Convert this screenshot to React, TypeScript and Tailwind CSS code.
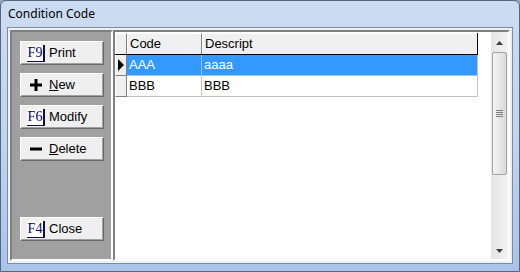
import React from 'react';

type Row = { code: string; desc: string; selected?: boolean };

const rows: Row[] = [
  { code: 'AAA', desc: 'aaaa', selected: true },
  { code: 'BBB', desc: 'BBB' },
];

function KeyIcon({ label }: { label: string }) {
  return (
    <span className="flex h-[17px] w-[18px] items-center justify-center border-b border-r-2 border-[#101048] bg-white font-['Liberation_Serif'] text-[14px] leading-none text-[#000080]">
      {label}
    </span>
  );
}

function PlusIcon() {
  return (
    <svg width="12" height="12" viewBox="0 0 12 12" className="mx-[3px]">
      <path d="M4.5 0h3v4.5H12v3H7.5V12h-3V7.5H0v-3h4.5z" fill="#000" />
    </svg>
  );
}

function MinusIcon() {
  return (
    <svg width="12" height="12" viewBox="0 0 12 12" className="mx-[3px]">
      <rect x="0" y="4.5" width="12" height="3" fill="#000" />
    </svg>
  );
}

function Button({ icon, children }: { icon: React.ReactNode; children: React.ReactNode }) {
  return (
    <div className="flex h-[24px] w-[84px] items-center gap-[4px] border border-b-[#696969] border-l-white border-r-[#696969] border-t-white bg-[#efefef] pl-[6px] text-[13px] text-black shadow-[inset_-1px_-1px_0_#a0a0a0]">
      {icon}
      <span>{children}</span>
    </div>
  );
}

export default function App() {
  return (
    <div className="h-[272px] w-[520px] overflow-hidden bg-[#9aa7b6] font-['Liberation_Sans',sans-serif]">
      <div className="flex h-full flex-col rounded-t-[6px] border border-[#56667d] bg-gradient-to-b from-[#cbdcf2] via-[#c2d5ef] to-[#a9c3ea]">
        <div className="flex h-[26px] items-center pl-[7px] font-['Noto_Sans',sans-serif] text-[12px] text-black">
          Condition Code
        </div>
        <div className="mx-[6px] mb-[7px] flex flex-1 border border-[#7d8ca3] bg-[#f0f0f0] p-[2px]">
          {/* left command panel */}
          <div className="flex w-[103px] flex-col gap-[8px] border-2 border-b-white border-l-[#808080] border-r-white border-t-[#808080] bg-[#a0a0a0] pb-[18px] pl-[8px] pt-[9px]">
            <Button icon={<KeyIcon label="F9" />}>Print</Button>
            <Button icon={<PlusIcon />}>
              <span className="underline">N</span>ew
            </Button>
            <Button icon={<KeyIcon label="F6" />}>Modify</Button>
            <Button icon={<MinusIcon />}>
              <span className="underline">D</span>elete
            </Button>
            <div className="mt-auto">
              <Button icon={<KeyIcon label="F4" />}>Close</Button>
            </div>
          </div>

          {/* grid */}
          <div className="flex flex-1 border-2 border-b-white border-l-[#808080] border-r-white border-t-[#808080] bg-white">
            <div className="flex-1 pt-[1px] text-[13px]">
              <div className="flex h-[22px] w-[363px] border-b border-r border-black bg-[#f0f0f0]">
                <div className="w-[12px] border-l border-r border-t border-b-0 border-l-white border-r-[#808080] border-t-white" />
                <div className="flex w-[75px] items-center border-l border-r border-t border-l-white border-r-[#808080] border-t-white pl-[2px]">
                  Code
                </div>
                <div className="flex flex-1 items-center border-l border-t border-l-white border-t-white pl-[2px]">
                  Descript
                </div>
              </div>
              {rows.map((r) => (
                <div key={r.code} className="flex h-[21px] w-[363px]">
                  <div className="flex w-[12px] items-center border-b border-l border-r border-b-[#808080] border-l-white border-r-[#808080] bg-[#f0f0f0]">
                    {r.selected && (
                      <svg width="8" height="12" viewBox="0 0 8 12" className="ml-[1px]">
                        <path d="M1 0v12l6-6z" fill="#000" />
                      </svg>
                    )}
                  </div>
                  <div
                    className={`flex w-[75px] items-center border-b border-r pl-[2px] ${
                      r.selected
                        ? 'border-b-[#99c4f0] border-r-[#99c4f0] bg-[#3399ff] text-white'
                        : 'border-b-[#c0c0c0] border-r-[#c0c0c0] text-black'
                    }`}
                  >
                    {r.code}
                  </div>
                  <div
                    className={`flex flex-1 items-center border-b border-r pl-[2px] ${
                      r.selected
                        ? 'border-b-[#99c4f0] border-r-[#c0c0c0] bg-[#3399ff] text-white'
                        : 'border-b-[#c0c0c0] border-r-[#c0c0c0] text-black'
                    }`}
                  >
                    {r.desc}
                  </div>
                </div>
              ))}
            </div>

            {/* scrollbar */}
            <div className="flex w-[17px] flex-col bg-gradient-to-r from-[#e4e4e4] to-[#f3f3f3] pt-[2px]">
              <div className="flex h-[17px] items-center justify-center">
                <svg width="7" height="4" viewBox="0 0 7 4">
                  <path d="M3.5 0L7 4H0z" fill="#3e3e3e" />
                </svg>
              </div>
              <div className="mx-[1px] mt-[1px] flex h-[123px] items-center justify-center rounded-[2px] border border-[#a3a3a3] bg-gradient-to-r from-[#f4f4f4] to-[#dadada]">
                <div className="flex flex-col gap-[1px]">
                  <div className="h-[1px] w-[7px] bg-[#7a7a7a]" />
                  <div className="h-[1px] w-[7px] bg-[#7a7a7a]" />
                  <div className="h-[1px] w-[7px] bg-[#7a7a7a]" />
                  <div className="h-[1px] w-[7px] bg-[#7a7a7a]" />
                </div>
              </div>
              <div className="flex-1" />
              <div className="flex h-[17px] items-center justify-center">
                <svg width="7" height="4" viewBox="0 0 7 4">
                  <path d="M0 0h7L3.5 4z" fill="#3e3e3e" />
                </svg>
              </div>
            </div>
          </div>
        </div>
      </div>
    </div>
  );
}
